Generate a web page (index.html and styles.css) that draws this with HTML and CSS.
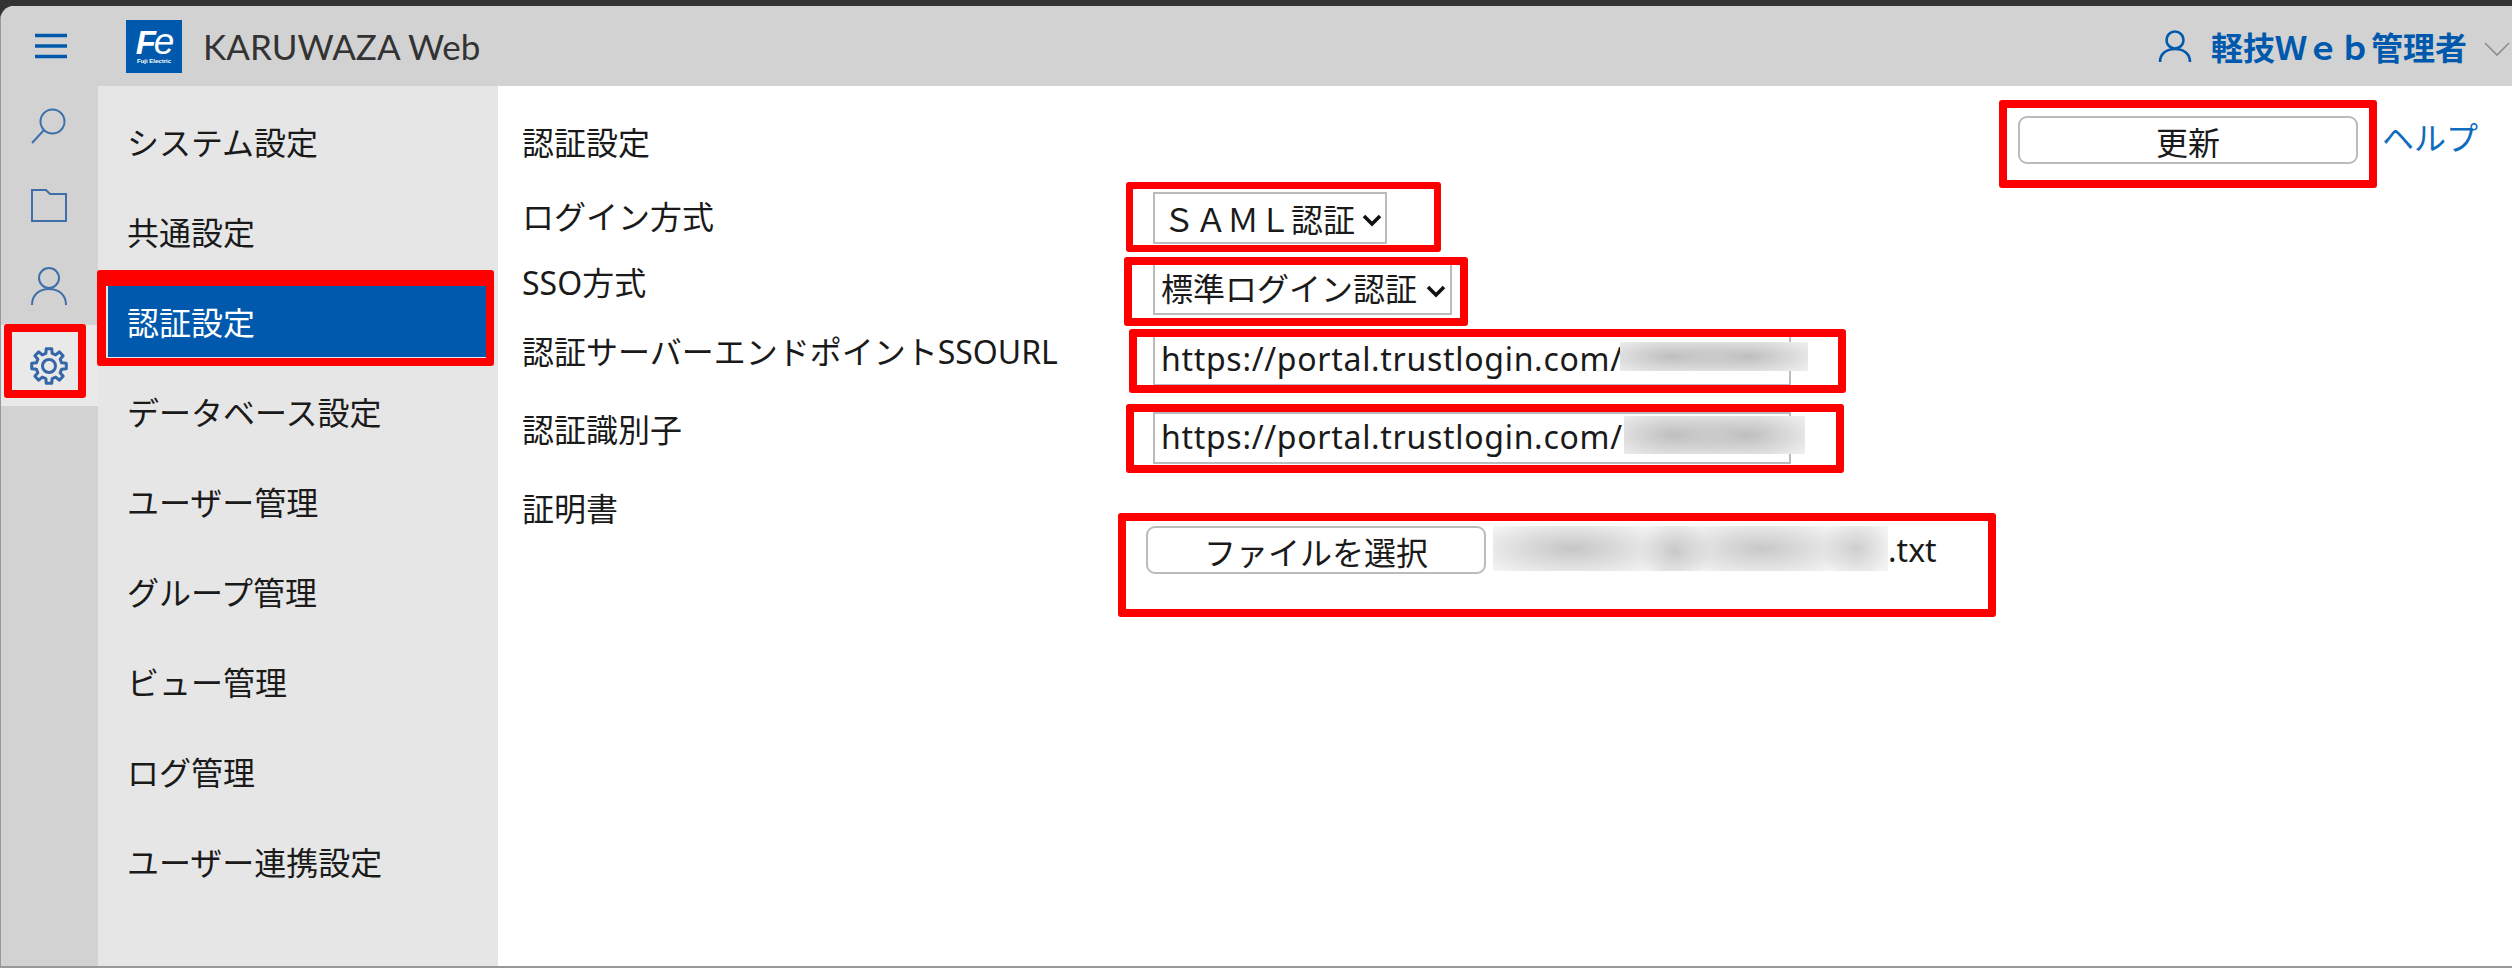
FILE: index.html
```html
<!DOCTYPE html>
<html lang="ja">
<head>
    <meta charset="UTF-8">
    <title>KARUWAZA Web 認証設定</title>
    <link rel="stylesheet" href="styles.css">
</head>
<body>
    <div class="topbar"></div>
    <div class="window">
        <!-- ヘッダー -->
        <header class="header">
            <div class="burger">
                <svg width="34" height="26" viewBox="0 0 34 26"><path d="M1 2.5H33M1 13H33M1 23.5H33" stroke="#0059ac" stroke-width="3.4" fill="none"/></svg>
            </div>
            <div class="logo">
                <span class="logo-fe"><b>F</b>e</span>
                <span class="logo-sub">Fuji Electric</span>
            </div>
            <div class="product">KARUWAZA Web</div>
            <div class="user">
                <svg width="34" height="34" viewBox="0 0 34 34"><circle cx="17" cy="11" r="8.5" stroke="#0059ac" stroke-width="2.6" fill="none"/><path d="M2 33C2 25 8 20 17 20S32 25 32 33" stroke="#0059ac" stroke-width="2.6" fill="none"/></svg>
                <span class="user-name">軽技Ｗｅｂ管理者</span>
                <svg class="user-chevron" width="26" height="16" viewBox="0 0 26 16"><path d="M1 2L13 14L25 2" stroke="#8a8f96" stroke-width="1.6" fill="none"/></svg>
            </div>
        </header>

        <div class="content">
            <!-- 左アイコン -->
            <nav class="rail">
                <a class="rail-item">
                    <svg width="38" height="38" viewBox="0 0 38 38"><circle cx="22.5" cy="14.5" r="12" stroke="#3f6fa8" stroke-width="2" fill="none"/><path d="M14 23L2 36" stroke="#3f6fa8" stroke-width="2" fill="none"/></svg>
                </a>
                <a class="rail-item">
                    <svg width="38" height="36" viewBox="0 0 38 36"><path d="M2 2H16L20 6H36V33H2Z" stroke="#3f6fa8" stroke-width="2" fill="none"/></svg>
                </a>
                <a class="rail-item">
                    <svg width="38" height="40" viewBox="0 0 38 40"><circle cx="19" cy="12" r="10" stroke="#3f6fa8" stroke-width="2" fill="none"/><path d="M2 39C2 29 9 23 19 23S36 29 36 39" stroke="#3f6fa8" stroke-width="2" fill="none"/></svg>
                </a>
                <a class="rail-item rail-active">
                    <svg width="38" height="38" viewBox="-19 -19 38 38"><circle r="6.5" stroke="#3566a8" stroke-width="3" fill="none"/><polygon points="12.61,-3.14 17.28,-2.74 17.28,2.74 12.61,3.14 11.14,6.7 14.16,10.29 10.29,14.16 6.7,11.14 3.14,12.61 2.74,17.28 -2.74,17.28 -3.14,12.61 -6.7,11.14 -10.29,14.16 -14.16,10.29 -11.14,6.7 -12.61,3.14 -17.28,2.74 -17.28,-2.74 -12.61,-3.14 -11.14,-6.7 -14.16,-10.29 -10.29,-14.16 -6.7,-11.14 -3.14,-12.61 -2.74,-17.28 2.74,-17.28 3.14,-12.61 6.7,-11.14 10.29,-14.16 14.16,-10.29 11.14,-6.7" stroke="#3566a8" stroke-width="3" stroke-linejoin="round" fill="none"/></svg>
                </a>
            </nav>

            <!-- メニュー -->
            <ul class="menu">
                <li>システム設定</li>
                <li>共通設定</li>
                <li class="menu-active">認証設定</li>
                <li>データベース設定</li>
                <li>ユーザー管理</li>
                <li>グループ管理</li>
                <li>ビュー管理</li>
                <li>ログ管理</li>
                <li>ユーザー連携設定</li>
            </ul>

            <!-- 認証設定フォーム -->
            <main class="main">
                <div class="title-row">
                    <div class="title">認証設定</div>
                    <div class="title-actions">
                        <button class="btn btn-update">更新</button>
                        <a class="help">ヘルプ</a>
                    </div>
                </div>
                <div class="row row-login">
                    <label>ログイン方式</label>
                    <select class="field select-login"><option>ＳＡＭＬ認証</option></select>
                </div>
                <div class="row row-sso">
                    <label>SSO方式</label>
                    <select class="field select-sso"><option>標準ログイン認証</option></select>
                </div>
                <div class="row row-url">
                    <label>認証サーバーエンドポイントSSOURL</label>
                    <div class="url-wrap">
                        <input class="field url" value="https://portal.trustlogin.com/">
                        <span class="blur blur-a"></span>
                    </div>
                </div>
                <div class="row row-id">
                    <label>認証識別子</label>
                    <div class="url-wrap">
                        <input class="field url" value="https://portal.trustlogin.com/">
                        <span class="blur blur-b"></span>
                    </div>
                </div>
                <div class="row row-cert">
                    <label>証明書</label>
                    <div class="file">
                        <button class="btn btn-file">ファイルを選択</button>
                        <span class="blur-file"></span>
                        <span class="file-ext">.txt</span>
                    </div>
                </div>
            </main>
        </div>
    </div>

    <!-- 赤枠 -->
    <div class="mark mark-gear"></div>
    <div class="mark mark-menu"></div>
    <div class="mark mark-update"></div>
    <div class="mark mark-login"></div>
    <div class="mark mark-sso"></div>
    <div class="mark mark-url"></div>
    <div class="mark mark-id"></div>
    <div class="mark mark-file"></div>
</body>
</html>
```

FILE: styles.css
```css
* {
    box-sizing: border-box;
}

html, body {
    margin: 0;
    height: 968px;
    overflow: hidden;
}

body {
    position: relative;
    background: #333;
    font-family: "Noto Sans", "Noto Sans CJK JP", sans-serif;
    font-size: 32px;
    color: #1a1a1a;
}

.topbar {
    height: 6px;
    background: #333;
}

.window {
    height: 962px;
    background: #fff;
    border-left: 1px solid #999;
    border-bottom: 2px solid #999;
    border-top-left-radius: 14px;
    overflow: hidden;
}

/* ヘッダー */
.header {
    height: 80px;
    background: #d2d2d2;
    display: flex;
    align-items: center;
}

.burger {
    width: 125px;
    padding-left: 33px;
    display: flex;
}

.logo {
    width: 56px;
    height: 53px;
    background: #0059ac;
    color: #fff;
    display: flex;
    flex-direction: column;
    align-items: center;
    justify-content: center;
}

.logo-fe {
    font-family: "Liberation Sans", sans-serif;
    font-style: italic;
    font-size: 37px;
    line-height: 29px;
    letter-spacing: -2px;
}

.logo-fe b {
    font-size: 33px;
}

.logo-sub {
    font-family: "Liberation Sans", sans-serif;
    font-size: 6px;
    font-weight: bold;
    line-height: 8px;
}

.product {
    margin-left: 21px;
    font-family: Lato, sans-serif;
    font-size: 35px;
    color: #333;
}

.user {
    margin-left: auto;
    display: flex;
    align-items: center;
    padding-right: 2px;
    color: #0059ac;
}

.user-name {
    margin-left: 19px;
    font-weight: bold;
    font-size: 32px;
}

.user-chevron {
    margin-left: 17px;
    margin-top: 6px;
}

.content {
    display: flex;
    height: 880px;
}

/* 左アイコン */
.rail {
    width: 97px;
    background: #d2d2d2;
}

.rail-item {
    height: 80px;
    padding-left: 29px;
    display: flex;
    align-items: center;
}

.rail-active {
    height: 81px;
    margin-top: -1px;
    background: #e9e9e9;
}

/* メニュー */
.menu {
    width: 400px;
    margin: 0;
    padding: 19px 8px 0 10px;
    list-style: none;
    background: #e6e6e6;
}

.menu li {
    height: 72px;
    margin-bottom: 18px;
    padding-left: 19px;
    display: flex;
    align-items: center;
}

.menu .menu-active {
    background: #0059ac;
    color: #fff;
}

/* フォーム */
.main {
    flex: 1;
    padding: 30px 34px 0 24px;
}

.title-row {
    height: 74px;
    display: flex;
    justify-content: space-between;
}

.title, label {
    line-height: 48px;
}

.title {
    padding-top: 3px;
}

.title-actions {
    display: flex;
    align-items: flex-start;
}

.btn {
    background: #fff;
    border: 2px solid #bbb;
    border-radius: 9px;
    font: inherit;
    color: #1a1a1a;
    padding: 0;
}

.btn-update {
    width: 340px;
    height: 48px;
    padding-bottom: 2px;
}

.help {
    margin-left: 24px;
    line-height: 44px;
    color: #0f6cbd;
}

.row {
    display: flex;
    align-items: flex-start;
}

.row label {
    width: 631px;
    flex: none;
}

.row-login { height: 69px; }
.row-sso { height: 69px; }
.row-url { height: 78px; }
.row-id { height: 79px; }

.row-login label {
    padding-top: 3px;
}

.field {
    height: 52px;
    background: #fff;
    border: 2px solid #bbb;
    font: inherit;
    color: #1a1a1a;
    padding: 0;
}

select.field {
    appearance: none;
    background: #fff url("data:image/svg+xml,%3Csvg xmlns='http://www.w3.org/2000/svg' width='20' height='13' viewBox='0 0 20 13'%3E%3Cpath d='M2 2L10 10L18 2' stroke='%23111' stroke-width='3.6' fill='none'/%3E%3C/svg%3E") no-repeat;
}

.select-login {
    width: 234px;
    margin-top: 2px;
    padding: 2px 0 0 8px;
    background-position: 207px 20px !important;
}

.select-sso {
    width: 299px;
    margin-top: 4px;
    padding: 0 0 2px 6px;
    background-position: 271px 20px !important;
}

.url-wrap {
    position: relative;
    width: 638px;
    margin-top: 6px;
}

.url {
    width: 638px;
    padding: 0 0 3px 6px;
    letter-spacing: 0.7px;
}

/* ぼかし */
.blur, .blur-file {
    background:
        radial-gradient(ellipse 42% 75% at 28% 50%, #bebebe, transparent),
        radial-gradient(ellipse 40% 75% at 68% 50%, #bebebe, transparent),
        #efefef;
}

.blur {
    position: absolute;
}

.blur-a {
    left: 467px;
    width: 188px;
    top: 8px;
    height: 29px;
}

.blur-b {
    left: 471px;
    width: 181px;
    top: 4px;
    height: 38px;
}

.file {
    display: flex;
    align-items: flex-start;
    margin-top: 41px;
    margin-left: -7px;
}

.btn-file {
    width: 340px;
    height: 48px;
}

/* ファイル名のぼかしは塊ごとに置く */
.blur-file {
    width: 395px;
    height: 45px;
    margin-left: 7px;
    background:
        radial-gradient(ellipse 26% 70% at 20% 50%, #c6c6c6, transparent),
        radial-gradient(ellipse 9% 75% at 46% 55%, #c8c8c8, transparent),
        radial-gradient(ellipse 24% 70% at 68% 50%, #c8c8c8, transparent),
        radial-gradient(ellipse 9% 70% at 92% 50%, #cecece, transparent),
        #f3f3f3;
}

.file-ext {
    line-height: 48px;
}

/* 赤枠 */
.mark {
    position: absolute;
    border: 8px solid #f00;
    border-radius: 3px;
}

.mark-gear { left: 4px; top: 324px; width: 82px; height: 74px; }
.mark-menu { left: 97px; top: 270px; width: 397px; height: 96px; border-width: 16px 8px 8px 9px; }
.mark-update { left: 1999px; top: 100px; width: 378px; height: 88px; }
.mark-login { left: 1126px; top: 182px; width: 315px; height: 70px; border-width: 7px; }
.mark-sso { left: 1124px; top: 257px; width: 344px; height: 69px; }
.mark-url { left: 1129px; top: 329px; width: 717px; height: 64px; }
.mark-id { left: 1126px; top: 404px; width: 718px; height: 69px; }
.mark-file { left: 1118px; top: 513px; width: 878px; height: 104px; }
```
